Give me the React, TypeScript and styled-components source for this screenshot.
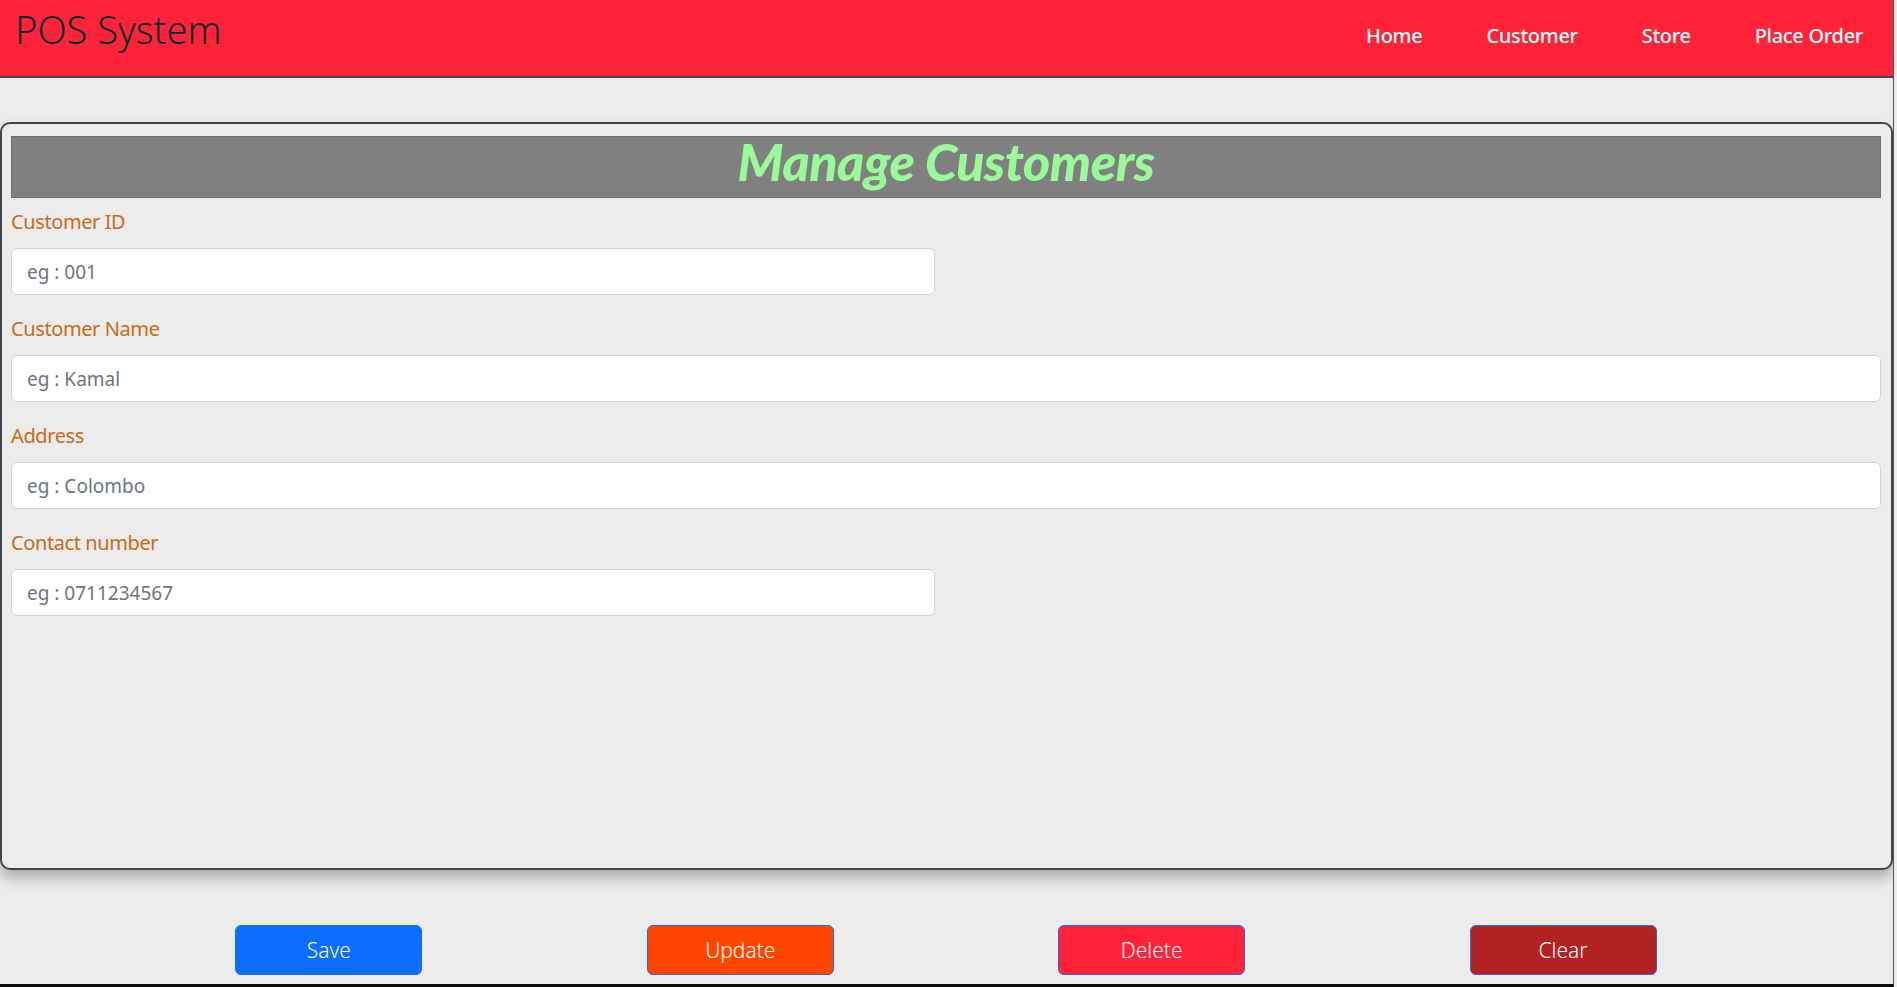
import styled, { createGlobalStyle } from "styled-components"

const GlobalStyle = createGlobalStyle`
    * {
        box-sizing: border-box;
    }
    body {
        margin: 0;
        background-color: #ebeceb;
        font-family: "Noto Sans", "Open Sans", sans-serif;
    }
`

const Frame = styled.div`
    width: 1894px;
    height: 987px;
    border-right: 1px solid #4a525a;
    border-bottom: 3px solid #0b0b0b;
    overflow: hidden;
`

const NavBar = styled.nav`
    display: flex;
    justify-content: space-between;
    align-items: center;
    height: 78px;
    padding: 0 30px 0 15px;
    background-color: #ff2339;
    border-bottom: 2px solid #3b4a52;
`

const Brand = styled.span`
    align-self: flex-start;
    margin-top: 3px;
    font-size: 38px;
    font-weight: 300;
    color: #0b2a30;
`

const NavLinks = styled.ul`
    display: flex;
    gap: 64px;
    margin: 0 0 5px;
    padding: 0;
    list-style: none;
`

const NavLink = styled.li`
    font-size: 20px;
    font-weight: 500;
    color: #fff;
    letter-spacing: -0.3px;
`

const Card = styled.section`
    display: flex;
    flex-direction: column;
    height: 748px;
    margin-top: 44px;
    padding: 12px 10px 0 9px;
    border: 2px solid #3d4650;
    border-radius: 10px;
    box-shadow: 0 8px 14px rgba(0, 0, 0, 0.28);
`

const TitleBar = styled.div`
    height: 62px;
    background-color: #808080;
    border: 1px solid #6e6e6e;
    text-align: center;
`

const Title = styled.h1`
    margin: 0;
    font-family: Lato, "Noto Sans", sans-serif;
    font-size: 52px;
    font-weight: 900;
    font-style: italic;
    line-height: 48px;
    letter-spacing: -0.5px;
    color: #98fb98;
`

const Field = styled.div`
    display: flex;
    flex-direction: column;
    margin-top: 9px;

    & + & {
        margin-top: 19px;
    }
`

const Label = styled.label`
    margin-bottom: 11px;
    font-size: 20px;
    line-height: 30px;
    color: #cc6a16;
    letter-spacing: -0.4px;
`

const Input = styled.input<{ $half?: boolean }>`
    width: ${(p) => (p.$half ? "924px" : "100%")};
    height: 47px;
    padding: 0 15px;
    font-family: "Noto Sans", sans-serif;
    font-size: 19px;
    color: #212529;
    background-color: #fff;
    border: 1px solid #ced4da;
    border-radius: 6px;
    outline: none;

    &::placeholder {
        color: #6c757d;
    }
`

const ButtonRow = styled.div`
    display: flex;
    justify-content: space-evenly;
    margin: 55px 12px 0 11px;
`

const ActionButton = styled.button<{ $bg: string; $border: string }>`
    width: 187px;
    height: 50px;
    font-family: "Noto Sans", sans-serif;
    font-size: 21px;
    font-weight: 300;
    color: #fff;
    background-color: ${(p) => p.$bg};
    border: 1px solid ${(p) => p.$border};
    border-radius: 6px;
`

const fields = [
    { label: "Customer ID", placeholder: "eg : 001", half: true },
    { label: "Customer Name", placeholder: "eg : Kamal", half: false },
    { label: "Address", placeholder: "eg : Colombo", half: false },
    { label: "Contact number", placeholder: "eg : 0711234567", half: true },
]

const buttons = [
    { text: "Save", bg: "#0d6efd", border: "#0d6efd" },
    { text: "Update", bg: "#ff4500", border: "#1a6cf0" },
    { text: "Delete", bg: "#ff2339", border: "#1a6cf0" },
    { text: "Clear", bg: "#b22222", border: "#1a6cf0" },
]

export default function App() {
    return (
        <Frame>
            <GlobalStyle />
            <NavBar>
                <Brand>POS System</Brand>
                <NavLinks>
                    <NavLink>Home</NavLink>
                    <NavLink>Customer</NavLink>
                    <NavLink>Store</NavLink>
                    <NavLink>Place Order</NavLink>
                </NavLinks>
            </NavBar>
            <Card>
                <TitleBar>
                    <Title>Manage Customers</Title>
                </TitleBar>
                {fields.map((f) => (
                    <Field key={f.label}>
                        <Label>{f.label}</Label>
                        <Input $half={f.half} placeholder={f.placeholder} />
                    </Field>
                ))}
            </Card>
            <ButtonRow>
                {buttons.map((b) => (
                    <ActionButton key={b.text} $bg={b.bg} $border={b.border}>
                        {b.text}
                    </ActionButton>
                ))}
            </ButtonRow>
        </Frame>
    )
}
